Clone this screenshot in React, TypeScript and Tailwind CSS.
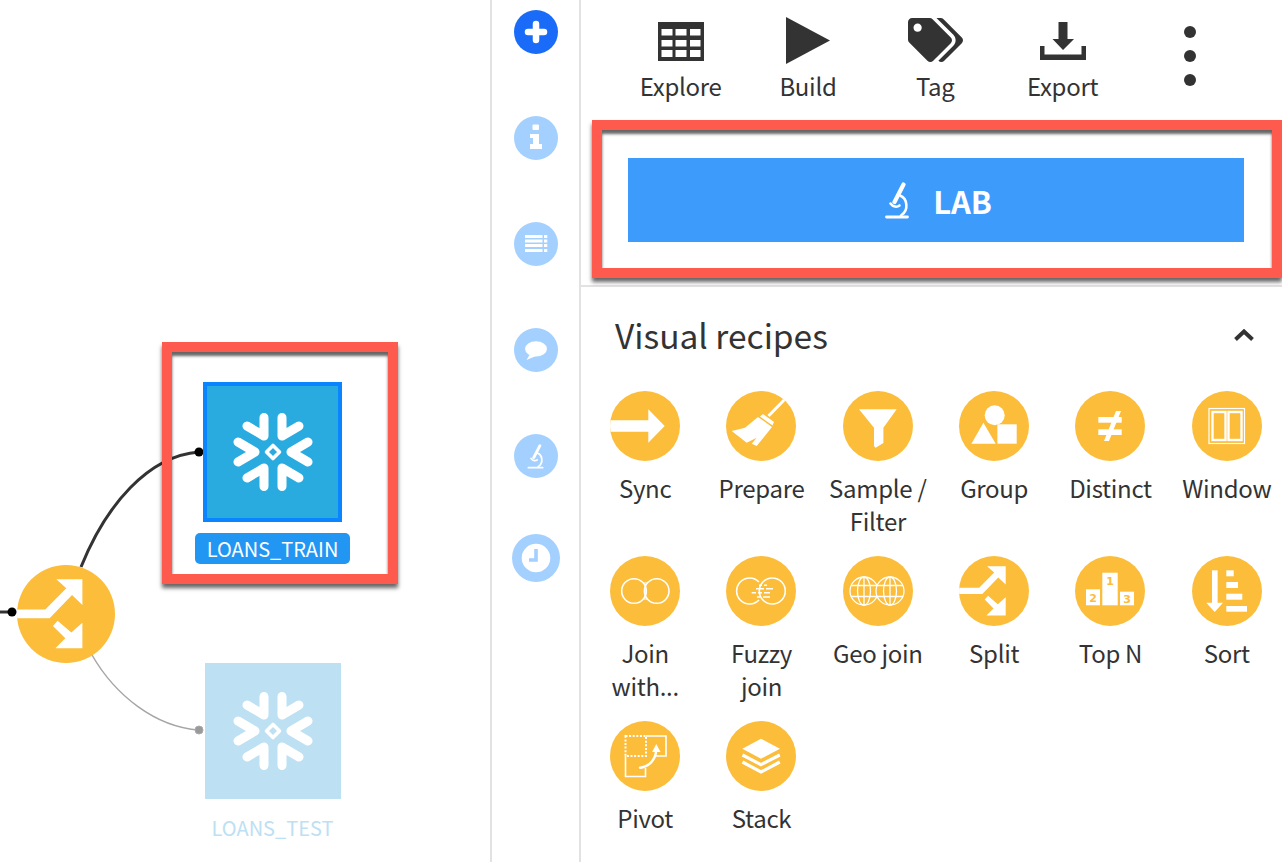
import React from "react";
import { FaTags } from "react-icons/fa";

const Microscope = ({ className }: { className: string }) => (
  <svg viewBox="0 0 24 37" className={className} fill="none" stroke="currentColor" strokeLinecap="round">
    <path d="M18.5 2.5 L9.5 20" strokeWidth="4.2" />
    <path d="M15 13.5 C22 16 24.5 28 16 33.5" strokeWidth="2.6" />
    <path d="M5.5 21.5 C8 25 12 25.5 14.5 23.5" strokeWidth="2.6" />
    <path d="M1.5 35 H22.5" strokeWidth="2.8" />
  </svg>
);

const Snowflake = () => (
  <svg viewBox="-40 -40 80 80" className="h-[80px] w-[80px]" fill="none" stroke="white" strokeWidth="9" strokeLinecap="round" strokeLinejoin="round">
    <path d="M-9 -34.5 V-16 L-26 -26" />
    <path d="M9 -34.5 V-16 L26 -26" />
    <path d="M-9 34.5 V16 L-26 26" />
    <path d="M9 34.5 V16 L26 26" />
    <path d="M-35 -10 L-18 0 L-35 10" />
    <path d="M35 -10 L18 0 L35 10" />
    <path d="M0 -6.5 L6.5 0 L0 6.5 L-6.5 0 Z" strokeWidth="3.6" />
  </svg>
);

const SplitShapes = () => (
  <>
    <polygon points="28.1,10.2 46.7,10.2 46.7,28.6 39.3,21.4 23.3,38.1 0,38.1 0,31.7 20.2,31.7 35.2,16.6" fill="white" />
    <polygon points="29,39.8 25.7,43.6 34.5,52.4 27.4,59.5 46.7,59.5 46.7,41.2 38.8,48.3" fill="white" />
  </>
);

const lensRows = [27, 29, 31, 33, 35, 37, 39, 41, 43];

const Globe = ({ cx }: { cx: number }) => (
  <g fill="#fbbd3a" stroke="white" strokeWidth="1.3">
    <circle cx={cx} cy="35" r="14" />
    <ellipse cx={cx} cy="35" rx="6.5" ry="14" />
    <path d={`M${cx} 21 V49 M${cx - 13} 29.5 H${cx + 13} M${cx - 13} 40.5 H${cx + 13}`} fill="none" />
  </g>
);

const recipeIcons: Record<string, React.ReactNode> = {
  sync: <polygon points="0,29.3 38.3,29.3 38.3,18.3 54.7,35 38.3,51.7 38.3,40.7 0,40.7" fill="white" />,
  prepare: (
    <>
      <path d="M62 5 L42.5 25" stroke="white" strokeWidth="3" />
      <polygon points="37,23 48,31 46.5,34.5 34,25.5" fill="white" />
      <polygon points="5.7,40 19,36.7 32,26 46,36 30.7,55 25.7,52.7 30.7,46.7 20.7,51.7" fill="white" />
    </>
  ),
  filter: <path d="M16 18.3 H53.7 L40.4 36.7 V52 L32.7 56.7 Q31 56 31 54 V36.7 Z" fill="white" />,
  group: (
    <>
      <circle cx="35.7" cy="24.3" r="10" fill="white" />
      <polygon points="12.4,52.7 24.4,31.7 36.7,52.7" fill="white" />
      <rect x="38.4" y="33.3" width="19.3" height="19.4" fill="white" />
    </>
  ),
  distinct: (
    <>
      <rect x="23.3" y="26" width="23.4" height="5.7" fill="white" />
      <rect x="23.3" y="38.3" width="23.4" height="5.7" fill="white" />
      <polygon points="41,20 46,20 34,50 29,50" fill="white" />
    </>
  ),
  window: (
    <g fill="none" stroke="white">
      <rect x="17" y="17.5" width="35.5" height="35" strokeWidth="1.2" />
      <rect x="20.5" y="21" width="13" height="28" strokeWidth="2.4" />
      <rect x="36.5" y="21" width="13" height="28" strokeWidth="2.4" />
    </g>
  ),
  join: (
    <g stroke="white" fill="none">
      <circle cx="24" cy="35" r="12.3" strokeWidth="1.6" />
      <circle cx="46.7" cy="35" r="12.3" strokeWidth="1.6" />
      {lensRows.map((y) => {
        const half = Math.sqrt(151 - (y - 35) * (y - 35));
        return <path key={y} d={`M${46.7 - half} ${y} H${24 + half}`} strokeWidth="1" />;
      })}
    </g>
  ),
  fuzzy: (
    <g stroke="white" fill="none">
      <path d="M33 26 A13 13 0 1 0 33 44" strokeWidth="1.6" />
      <circle cx="46.3" cy="35" r="13" strokeWidth="1.6" />
      <path d="M33 29.3 H36 M38 29.3 H41 M30 32.7 H38 M40 32.7 H47 M25.7 36.7 H30 M32 36.7 H36 M38 36.7 H44 M31 41 H34 M37 41 H44" strokeWidth="1.5" />
    </g>
  ),
  geo: (
    <>
      <Globe cx={21} />
      <Globe cx={47} />
    </>
  ),
  split: <SplitShapes />,
  topn: (
    <>
      <rect x="27.3" y="16.7" width="15.4" height="32.6" fill="white" />
      <rect x="11" y="33.3" width="14" height="16" fill="white" />
      <rect x="45" y="35.7" width="14" height="13.6" fill="white" />
      <g fill="#fbbd3a" fontSize="11" fontWeight="700" textAnchor="middle" fontFamily="'DejaVu Sans', sans-serif">
        <text x="35" y="29">1</text>
        <text x="18" y="46">2</text>
        <text x="52" y="47">3</text>
      </g>
    </>
  ),
  sort: (
    <g fill="white">
      <rect x="20" y="14.3" width="5.6" height="33" />
      <polygon points="14.3,46.7 31,46.7 22.7,56" />
      <rect x="34.3" y="14.3" width="7.4" height="6" />
      <rect x="34.3" y="26" width="11.7" height="6" />
      <rect x="34.3" y="37.7" width="16" height="6" />
      <rect x="34.3" y="50" width="20.7" height="5.7" />
    </g>
  ),
  pivot: (
    <g fill="none" stroke="white">
      <rect x="15.5" y="15" width="20.5" height="20" strokeWidth="2" strokeDasharray="2 1.6" />
      <path d="M36 15 H56 V35 H44" strokeWidth="1.6" />
      <path d="M15.5 35 V55.5 H35.5 V47" strokeWidth="1.6" />
      <path d="M30 46.7 C38 46 45 40 46.2 30" strokeWidth="2.4" strokeLinecap="round" />
      <polygon points="42,31 50.5,31 46.3,23" fill="white" stroke="none" />
    </g>
  ),
  stack: (
    <>
      <polygon points="35,17.7 54,27.7 35,37.7 16.3,27.7" fill="white" />
      <path d="M16.5 34 L35 43.6 L53.8 34" fill="none" stroke="white" strokeWidth="3.2" />
      <path d="M16.5 41 L35 51 L53.8 41" fill="none" stroke="white" strokeWidth="3.2" />
    </>
  ),
};

const recipes = [
  { icon: "sync", name: "Sync" },
  { icon: "prepare", name: "Prepare" },
  { icon: "filter", name: "Sample /\nFilter" },
  { icon: "group", name: "Group" },
  { icon: "distinct", name: "Distinct" },
  { icon: "window", name: "Window" },
  { icon: "join", name: "Join\nwith..." },
  { icon: "fuzzy", name: "Fuzzy\njoin" },
  { icon: "geo", name: "Geo join" },
  { icon: "split", name: "Split" },
  { icon: "topn", name: "Top N" },
  { icon: "sort", name: "Sort" },
  { icon: "pivot", name: "Pivot" },
  { icon: "stack", name: "Stack" },
];

const RecipeIcon = ({ icon }: { icon: string }) => (
  <svg viewBox="0 0 70 70" className="h-[70px] w-[70px] rounded-full bg-[#fbbd3a]">
    {recipeIcons[icon]}
  </svg>
);

const FlowCanvas = () => (
  <div className="relative w-[490px] shrink-0">
    <svg className="absolute inset-0 h-full w-full" fill="none">
      <path d="M0 612 H12" stroke="#333" strokeWidth="3" />
      <circle cx="12" cy="612" r="4.5" fill="#000" />
      <path d="M81 567 C106 505 148 456 199 452" stroke="#333" strokeWidth="3" />
      <circle cx="199" cy="452" r="4.5" fill="#000" />
      <path d="M92 655 C115 695 155 727 199 730" stroke="#a6a6a6" strokeWidth="1.5" />
      <circle cx="199" cy="730" r="4" fill="#999" stroke="#aaa" />
    </svg>

    <svg viewBox="0 0 70 70" className="absolute left-[17px] top-[565px] h-[98px] w-[98px] rounded-full bg-[#fbbd3a]">
      <SplitShapes />
    </svg>

    <div className="absolute left-[203px] top-[382px] flex h-[140px] w-[139px] items-center justify-center border-[4px] border-[#0a84ff] bg-[#29abe0]">
      <Snowflake />
    </div>
    <div className="absolute left-[195px] top-[533px] flex h-[31px] w-[155px] items-center justify-center rounded-[5px] bg-[#2196f3] text-[20px] leading-[31px] text-white">
      LOANS_TRAIN
    </div>

    <div className="absolute left-[205px] top-[663px] flex h-[136px] w-[136px] items-center justify-center bg-[#bde0f3]">
      <Snowflake />
    </div>
    <div className="absolute left-[195px] top-[812px] w-[155px] text-center text-[20px] leading-[31px] text-[#bde0f3]">
      LOANS_TEST
    </div>
  </div>
);

const Rail = () => {
  const light = "flex h-[44px] w-[44px] items-center justify-center rounded-full bg-[#a3d0ff]";
  return (
    <div className="flex w-[91px] shrink-0 flex-col items-center gap-[62px] border-x-[2px] border-[#e2e2e2] pt-[10px]">
      <svg viewBox="0 0 44 44" className="h-[44px] w-[44px] rounded-full bg-[#1a6cf8]">
        <path d="M22 14 V30 M14 22 H30" stroke="white" strokeWidth="6.5" strokeLinecap="round" />
      </svg>
      <svg viewBox="0 0 44 44" className="h-[44px] w-[44px] rounded-full bg-[#a3d0ff]" fill="white">
        <rect x="18.5" y="8.5" width="6.5" height="5.5" rx="1" />
        <path d="M16 18 H25 V28 H28 V33 H16 V28 H19 V22 H16 Z" />
      </svg>
      <svg viewBox="0 0 44 44" className="h-[44px] w-[44px] rounded-full bg-[#a3d0ff]" fill="white">
        <rect x="11" y="13" width="17.5" height="3" />
        <rect x="11" y="17.5" width="17.5" height="3" />
        <rect x="11" y="22" width="17.5" height="3" />
        <rect x="11" y="27" width="17.5" height="3" />
        <rect x="30" y="13" width="3.3" height="3" />
        <rect x="30" y="17.5" width="3.3" height="3" />
        <rect x="30" y="22" width="3.3" height="3" />
        <rect x="30" y="27" width="3.3" height="3" />
      </svg>
      <svg viewBox="0 0 44 44" className="h-[44px] w-[44px] rounded-full bg-[#a3d0ff]" fill="white">
        <ellipse cx="22" cy="20.8" rx="11" ry="7.6" />
        <path d="M16 26 L12.5 32 L22 28 Z" />
      </svg>
      <div className={`${light} text-white`}>
        <Microscope className="h-[25px] w-[17px]" />
      </div>
      <svg viewBox="0 0 48 48" className="-mt-[6px] h-[48px] w-[48px] rounded-full bg-[#a3d0ff]">
        <circle cx="24" cy="24" r="14.3" fill="white" />
        <path d="M24 15 V26 H17" fill="none" stroke="#a3d0ff" strokeWidth="3.6" />
      </svg>
    </div>
  );
};

const Toolbar = () => {
  const cell = "flex w-[127.3px] flex-col items-center";
  const iconBox = "flex h-[60px] items-center justify-center text-[#333]";
  const label = "text-[24px] leading-[32px] tracking-[-0.3px] text-[#333]";
  return (
    <div className="flex h-[120px] shrink-0 pl-[36px] pt-[10px]">
      <div className={cell}>
        <div className={iconBox}>
          <svg viewBox="0 0 46 39" className="mt-[2px] h-[39px] w-[46px]">
            <rect width="46" height="39" fill="#333" />
            <g fill="white">
              <rect x="3.5" y="7" width="11" height="6.5" />
              <rect x="17.5" y="7" width="11" height="6.5" />
              <rect x="32" y="7" width="10.5" height="6.5" />
              <rect x="3.5" y="18" width="11" height="6.5" />
              <rect x="17.5" y="18" width="11" height="6.5" />
              <rect x="32" y="18" width="10.5" height="6.5" />
              <rect x="3.5" y="28" width="11" height="7" />
              <rect x="17.5" y="28" width="11" height="7" />
              <rect x="32" y="28" width="10.5" height="7" />
            </g>
          </svg>
        </div>
        <span className={label}>Explore</span>
      </div>
      <div className={cell}>
        <div className={iconBox}>
          <svg viewBox="0 0 44 47" className="ml-[1px] h-[47px] w-[44px]">
            <polygon points="0,0 44,23.5 0,47" fill="#333" />
          </svg>
        </div>
        <span className={label}>Build</span>
      </div>
      <div className={cell}>
        <div className={iconBox}>
          <FaTags className="h-[44px] w-[55px]" />
        </div>
        <span className={label}>Tag</span>
      </div>
      <div className={cell}>
        <div className={iconBox}>
          <svg viewBox="0 0 46 38" className="mt-[2px] h-[38px] w-[46px]" fill="#333">
            <path d="M18.5 0 H27.5 V17 H34 L23 28 L12.500 17 H18.5 Z" />
            <path d="M0 24 H4.500 V32.500 H41.500 V24 H46 V38 H0 Z" />
          </svg>
        </div>
        <span className={label}>Export</span>
      </div>
      <div className={`${cell} gap-[12px] pt-[16px]`}>
        <span className="h-[12px] w-[12px] rounded-full bg-[#333]" />
        <span className="h-[12px] w-[12px] rounded-full bg-[#333]" />
        <span className="h-[12px] w-[12px] rounded-full bg-[#333]" />
      </div>
    </div>
  );
};

const App = () => (
  <div className="relative flex h-[862px] w-[1282px] overflow-hidden bg-white font-['Noto_Sans_CJK_SC','Liberation_Sans',sans-serif]">
    <FlowCanvas />
    <Rail />
    <div className="flex min-w-0 flex-1 flex-col">
      <Toolbar />

      <div className="shrink-0 border-b-[2px] border-[#e2e2e2] pb-[43px] pl-[47px] pr-[38px] pt-[38px]">
        <div className="flex h-[84px] items-center justify-center gap-[24px] bg-[#3d9bfc] pl-[5px] text-white">
          <Microscope className="h-[37px] w-[24px]" />
          <span className="text-[31px] font-bold leading-none">LAB</span>
        </div>
      </div>

      <div className="flex h-[96px] shrink-0 items-center justify-between pl-[34px] pr-[28px]">
        <h2 className="text-[33.5px] leading-[44px] text-[#333]">Visual recipes</h2>
        <svg viewBox="0 0 20 12" className="h-[12px] w-[20px]" fill="none" stroke="#333" strokeWidth="4">
          <path d="M1.500 10.500 L10 2.500 L18.500 10.500" />
        </svg>
      </div>

      <div className="ml-[6px] mt-[8px] grid w-[698px] shrink-0 grid-cols-6 auto-rows-[165px]">
        {recipes.map((recipe) => (
          <div key={recipe.icon} className="flex flex-col items-center">
            <RecipeIcon icon={recipe.icon} />
            <span className="mt-[10px] whitespace-pre text-center text-[24px] leading-[33px] tracking-[-0.3px] text-[#333]">
              {recipe.name}
            </span>
          </div>
        ))}
      </div>
    </div>

    {/* red annotation frames drawn on top of the app */}
    <div className="pointer-events-none absolute left-[162px] top-[342px] h-[242px] w-[236px] border-[10px] border-[#ff5a4e] shadow-[0_4px_4px_rgba(0,0,0,0.6),inset_0_4px_3px_rgba(0,0,0,0.6)]" />
    <div className="pointer-events-none absolute left-[592px] top-[120px] h-[158px] w-[690px] border-[10px] border-[#ff5a4e] shadow-[0_4px_4px_rgba(0,0,0,0.6),inset_0_4px_3px_rgba(0,0,0,0.6)]" />
  </div>
);

export default App;
